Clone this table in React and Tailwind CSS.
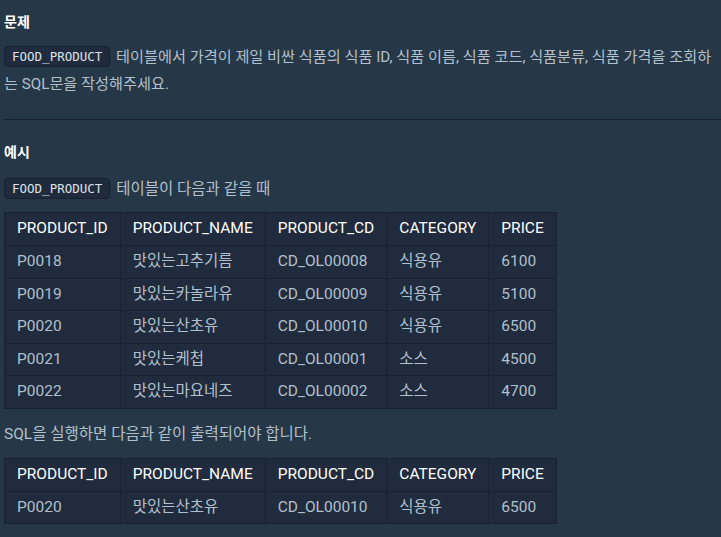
import React from "react";

const rows = [
  ["P0018", "맛있는고추기름", "CD_OL00008", "식용유", "6100"],
  ["P0019", "맛있는카놀라유", "CD_OL00009", "식용유", "5100"],
  ["P0020", "맛있는산초유", "CD_OL00010", "식용유", "6500"],
  ["P0021", "맛있는케첩", "CD_OL00001", "소스", "4500"],
  ["P0022", "맛있는마요네즈", "CD_OL00002", "소스", "4700"],
];

const heads = ["PRODUCT_ID", "PRODUCT_NAME", "PRODUCT_CD", "CATEGORY", "PRICE"];

const Code = ({ children }) => (
  <code className="mr-[2px] inline-block rounded-[4px] border border-[#172130] bg-[#202b3d] px-[7px] text-[12.5px] leading-[19px] text-[#dde3e9] font-['DejaVu_Sans_Mono',monospace] align-[1px]">
    {children}
  </code>
);

const DataTable = ({ data }) => (
  <table className="border-collapse bg-[#202b3d] text-[15.5px]">
    <thead>
      <tr>
        {heads.map((h) => (
          <th
            key={h}
            className="border border-[#172130] px-3 h-[33px] text-left font-normal text-white"
          >
            {h}
          </th>
        ))}
      </tr>
    </thead>
    <tbody>
      {data.map((r) => (
        <tr key={r[0]}>
          {r.map((c, i) => (
            <td
              key={i}
              className="border border-[#172130] px-3 h-[32.5px] text-[#b2c0cc]"
            >
              {c}
            </td>
          ))}
        </tr>
      ))}
    </tbody>
  </table>
);

export default function App() {
  return (
    <div className="min-h-[537px] w-[721px] bg-[#263747] pl-1 pt-[13px] font-['Roboto','Noto_Sans_CJK_KR',sans-serif] text-[15.5px] text-[#b2c0cc]">
      {/* 문제 */}
      <h5 className="text-[14px] font-bold leading-[18px] text-white">문제</h5>
      <p className="mt-[13px] text-[15.2px] leading-[27px]">
        <Code>FOOD_PRODUCT</Code> 테이블에서 가격이 제일 비싼 식품의 식품 ID, 식품 이름,
        식품 코드, 식품분류, 식품 가격을 조회하는 SQL문을 작성해주세요.
      </p>
      <hr className="mt-[21px] border-t border-[#172130]" />

      {/* 예시 */}
      <h5 className="mt-[23px] text-[14px] font-bold leading-[18px] text-white">예시</h5>
      <p className="mt-[15px] leading-[27px]">
        <Code>FOOD_PRODUCT</Code> 테이블이 다음과 같을 때
      </p>
      <div className="mt-[9px]">
        <DataTable data={rows} />
      </div>
      <p className="mt-[12px] leading-[27px]">SQL을 실행하면 다음과 같이 출력되어야 합니다.</p>
      <div className="mt-[10px]">
        <DataTable data={[rows[2]]} />
      </div>
    </div>
  );
}
